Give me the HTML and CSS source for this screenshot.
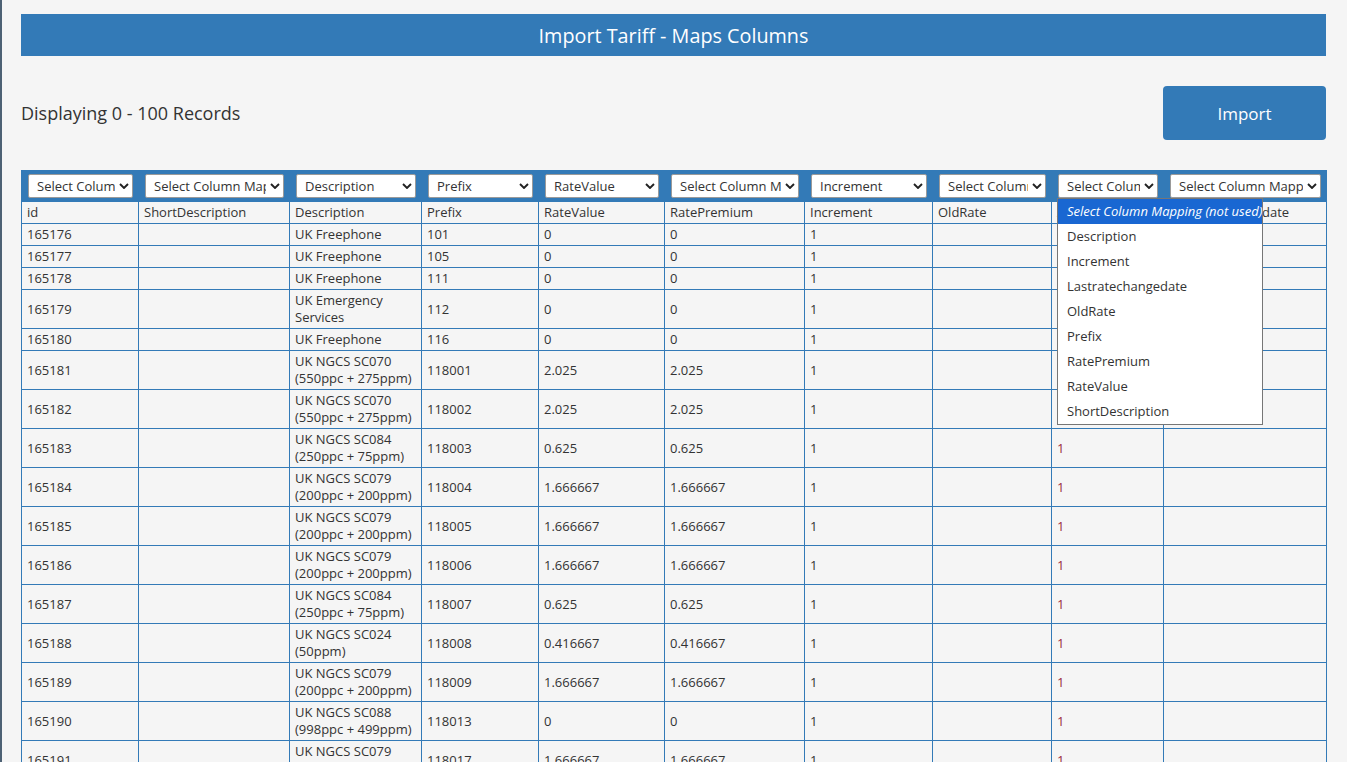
FILE: index.html
```html
<!DOCTYPE html>
<html lang="en">
<head>
<meta charset="utf-8">
<title>Import Tariff - Maps Columns</title>
<link rel="stylesheet" href="styles.css">
</head>
<body>
<div class="frame">
  <div class="title-bar">Import Tariff - Maps Columns</div>
  <div class="toolbar">
    <div class="count">Displaying 0 - 100 Records</div>
    <button class="import-btn" type="button">Import</button>
  </div>
  <table class="grid">
    <colgroup>
      <col class="c1"><col class="c2"><col class="c3"><col class="c4"><col class="c5">
      <col class="c6"><col class="c7"><col class="c8"><col class="c9"><col class="c10">
    </colgroup>
    <thead>
      <tr class="map-row">
        <th><div class="sel"><span class="sel-text">Select Column Mapping (not used)</span><svg class="chev" viewBox="0 0 10 6"><path d="M1 1 L5 5 L9 1"/></svg></div></th>
        <th><div class="sel"><span class="sel-text">Select Column Mapping (not used)</span><svg class="chev" viewBox="0 0 10 6"><path d="M1 1 L5 5 L9 1"/></svg></div></th>
        <th><div class="sel"><span class="sel-text">Description</span><svg class="chev" viewBox="0 0 10 6"><path d="M1 1 L5 5 L9 1"/></svg></div></th>
        <th><div class="sel"><span class="sel-text">Prefix</span><svg class="chev" viewBox="0 0 10 6"><path d="M1 1 L5 5 L9 1"/></svg></div></th>
        <th><div class="sel"><span class="sel-text">RateValue</span><svg class="chev" viewBox="0 0 10 6"><path d="M1 1 L5 5 L9 1"/></svg></div></th>
        <th><div class="sel"><span class="sel-text">Select Column Mapping (not used)</span><svg class="chev" viewBox="0 0 10 6"><path d="M1 1 L5 5 L9 1"/></svg></div></th>
        <th><div class="sel"><span class="sel-text">Increment</span><svg class="chev" viewBox="0 0 10 6"><path d="M1 1 L5 5 L9 1"/></svg></div></th>
        <th><div class="sel"><span class="sel-text">Select Column Mapping (not used)</span><svg class="chev" viewBox="0 0 10 6"><path d="M1 1 L5 5 L9 1"/></svg></div></th>
        <th>
          <div class="sel-wrap">
            <div class="sel"><span class="sel-text">Select Column Mapping (not used)</span><svg class="chev" viewBox="0 0 10 6"><path d="M1 1 L5 5 L9 1"/></svg></div>
            <ul class="dropdown">
              <li class="active">Select Column Mapping (not used)</li>
              <li>Description</li>
              <li>Increment</li>
              <li>Lastratechangedate</li>
              <li>OldRate</li>
              <li>Prefix</li>
              <li>RatePremium</li>
              <li>RateValue</li>
              <li>ShortDescription</li>
            </ul>
          </div>
        </th>
        <th><div class="sel"><span class="sel-text">Select Column Mapping (not used)</span><svg class="chev" viewBox="0 0 10 6"><path d="M1 1 L5 5 L9 1"/></svg></div></th>
      </tr>
      <tr class="name-row">
        <th>id</th><th>ShortDescription</th><th>Description</th><th>Prefix</th><th>RateValue</th>
        <th>RatePremium</th><th>Increment</th><th>OldRate</th><th>Active</th><th>Lastratechangedate</th>
      </tr>
    </thead>
    <tbody>
      <tr><td>165176</td><td></td><td>UK Freephone</td><td>101</td><td>0</td><td>0</td><td>1</td><td></td><td class="flag">1</td><td></td></tr>
      <tr><td>165177</td><td></td><td>UK Freephone</td><td>105</td><td>0</td><td>0</td><td>1</td><td></td><td class="flag">1</td><td></td></tr>
      <tr><td>165178</td><td></td><td>UK Freephone</td><td>111</td><td>0</td><td>0</td><td>1</td><td></td><td class="flag">1</td><td></td></tr>
      <tr><td>165179</td><td></td><td>UK Emergency<br>Services</td><td>112</td><td>0</td><td>0</td><td>1</td><td></td><td class="flag">1</td><td></td></tr>
      <tr><td>165180</td><td></td><td>UK Freephone</td><td>116</td><td>0</td><td>0</td><td>1</td><td></td><td class="flag">1</td><td></td></tr>
      <tr><td>165181</td><td></td><td>UK NGCS SC070<br>(550ppc + 275ppm)</td><td>118001</td><td>2.025</td><td>2.025</td><td>1</td><td></td><td class="flag">1</td><td></td></tr>
      <tr><td>165182</td><td></td><td>UK NGCS SC070<br>(550ppc + 275ppm)</td><td>118002</td><td>2.025</td><td>2.025</td><td>1</td><td></td><td class="flag">1</td><td></td></tr>
      <tr><td>165183</td><td></td><td>UK NGCS SC084<br>(250ppc + 75ppm)</td><td>118003</td><td>0.625</td><td>0.625</td><td>1</td><td></td><td class="flag">1</td><td></td></tr>
      <tr><td>165184</td><td></td><td>UK NGCS SC079<br>(200ppc + 200ppm)</td><td>118004</td><td>1.666667</td><td>1.666667</td><td>1</td><td></td><td class="flag">1</td><td></td></tr>
      <tr><td>165185</td><td></td><td>UK NGCS SC079<br>(200ppc + 200ppm)</td><td>118005</td><td>1.666667</td><td>1.666667</td><td>1</td><td></td><td class="flag">1</td><td></td></tr>
      <tr><td>165186</td><td></td><td>UK NGCS SC079<br>(200ppc + 200ppm)</td><td>118006</td><td>1.666667</td><td>1.666667</td><td>1</td><td></td><td class="flag">1</td><td></td></tr>
      <tr><td>165187</td><td></td><td>UK NGCS SC084<br>(250ppc + 75ppm)</td><td>118007</td><td>0.625</td><td>0.625</td><td>1</td><td></td><td class="flag">1</td><td></td></tr>
      <tr><td>165188</td><td></td><td>UK NGCS SC024<br>(50ppm)</td><td>118008</td><td>0.416667</td><td>0.416667</td><td>1</td><td></td><td class="flag">1</td><td></td></tr>
      <tr><td>165189</td><td></td><td>UK NGCS SC079<br>(200ppc + 200ppm)</td><td>118009</td><td>1.666667</td><td>1.666667</td><td>1</td><td></td><td class="flag">1</td><td></td></tr>
      <tr><td>165190</td><td></td><td>UK NGCS SC088<br>(998ppc + 499ppm)</td><td>118013</td><td>0</td><td>0</td><td>1</td><td></td><td class="flag">1</td><td></td></tr>
      <tr><td>165191</td><td></td><td>UK NGCS SC079<br>(200ppc + 200ppm)</td><td>118017</td><td>1.666667</td><td>1.666667</td><td>1</td><td></td><td class="flag">1</td><td></td></tr>
    </tbody>
  </table>
</div>
</body>
</html>
```

FILE: styles.css
```css
html, body {
  margin: 0;
  padding: 0;
  background: #f5f5f5;
}

body {
  font-family: "Open Sans", "Noto Sans", "Liberation Sans", sans-serif;
  color: #333;
  overflow: hidden;
}

.frame {
  border-left: 2px solid #4d6174;
  padding: 14px 21px 0 19px;
  min-height: 762px;
  box-sizing: border-box;
}

.title-bar {
  background: #337ab7;
  color: #fff;
  height: 42px;
  display: flex;
  align-items: center;
  justify-content: center;
  font-size: 19.8px;
}

.toolbar {
  display: flex;
  align-items: center;
  justify-content: space-between;
  margin-top: 30px;
}

.count {
  font-size: 18px;
  color: #333;
}

.import-btn {
  width: 163px;
  height: 54px;
  background: #337ab7;
  color: #fff;
  border: none;
  border-radius: 4px;
  font-family: inherit;
  font-size: 17px;
  padding: 0;
}

.grid {
  margin-top: 30px;
  width: 100%;
  table-layout: fixed;
  border-collapse: collapse;
  font-size: 13px;
  line-height: 17px;
}

.c1 { width: 117px; }
.c2 { width: 151px; }
.c3 { width: 132px; }
.c4 { width: 117px; }
.c5 { width: 126px; }
.c6 { width: 140px; }
.c7 { width: 128px; }
.c8 { width: 119px; }
.c9 { width: 112px; }
.c10 { width: 163px; }

.grid th,
.grid td {
  border: 1px solid #337ab7;
  padding: 2px 5px;
  text-align: left;
  vertical-align: middle;
  font-weight: normal;
}

.map-row th {
  background: #337ab7;
  padding: 3px 5px 3px 6px;
}

.sel-wrap {
  position: relative;
}

.sel {
  height: 24px;
  box-sizing: border-box;
  background: #fff;
  border: 1px solid #9a9a9a;
  border-radius: 2px;
  display: flex;
  align-items: center;
  padding: 0 3px 0 8px;
  color: #333;
}

.sel-text {
  flex: 1;
  min-width: 0;
  overflow: hidden;
  white-space: nowrap;
  margin-right: 4px;
}

.chev {
  width: 10px;
  height: 6px;
  flex: none;
  fill: none;
  stroke: #222;
  stroke-width: 1.9;
}

.dropdown {
  position: absolute;
  top: 100%;
  left: -1px;
  width: 204px;
  margin: 0;
  padding: 0;
  list-style: none;
  background: #fff;
  border: 1px solid #767676;
  z-index: 5;
}

.dropdown li {
  height: 25px;
  line-height: 25px;
  padding-left: 9px;
  white-space: nowrap;
  color: #333;
}

.dropdown li.active {
  background: #1967d2;
  color: #fff;
  font-style: italic;
}

.grid td.flag {
  color: #9c2a3e;
}
```
